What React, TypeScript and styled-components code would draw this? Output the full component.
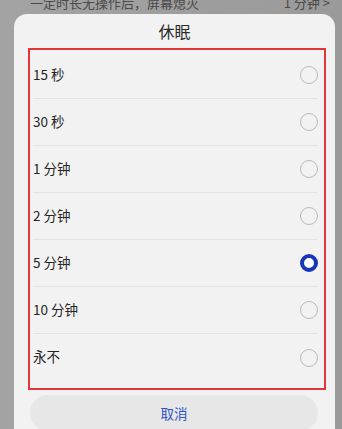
import styled, { createGlobalStyle } from 'styled-components'
import { useState } from 'react'

const GlobalStyle = createGlobalStyle`
  html, body {
    margin: 0;
    padding: 0;
    background: #9c9c9c;
    font-family: "Noto Sans CJK SC", "Noto Sans", sans-serif;
    overflow: hidden;
  }
`

const Screen = styled.div`
  width: 342px;
  height: 429px;
  overflow: hidden;
  background: linear-gradient(90deg, #a3a3a3 0%, #9a9a9a 100%);
`

const BackdropRow = styled.div`
  display: flex;
  align-items: flex-end;
  justify-content: space-between;
  height: 14px;
  padding: 0 12px 0 30px;
  color: #4a4a4a;
  font-size: 13px;
  white-space: nowrap;
  overflow: hidden;
`

const BackdropText = styled.span`
  line-height: 22px;
`

const Dialog = styled.div`
  margin-left: 14px;
  width: 321px;
  height: 430px;
  background: #f3f2f2;
  border-radius: 13px 13px 0 0;
  display: flex;
  flex-direction: column;
`

const Title = styled.div`
  height: 34px;
  display: flex;
  align-items: center;
  justify-content: center;
  font-size: 16px;
  color: #2c2c2c;
`

const OptionList = styled.ul`
  list-style: none;
  margin: 0 9px 0 14px;
  padding: 2px 6px 7px 3px;
  border: 2px solid #e2363b;
  display: flex;
  flex-direction: column;
`

const Option = styled.li<{ $last?: boolean }>`
  height: 47px;
  display: flex;
  align-items: center;
  justify-content: space-between;
  border-bottom: ${(p) => (p.$last ? 'none' : '1px solid #e3e3e3')};
  box-sizing: border-box;
  cursor: pointer;
`

const Label = styled.span`
  font-size: 13.5px;
  color: #242424;
  margin-bottom: 3px;
`

const Radio = styled.span<{ $checked: boolean }>`
  width: 18px;
  height: 18px;
  border-radius: 50%;
  box-sizing: border-box;
  border: ${(p) => (p.$checked ? '4px solid #1a36b8' : '1px solid #b9b9b9')};
  background: ${(p) => (p.$checked ? '#ffffff' : 'transparent')};
`

const CancelButton = styled.button`
  margin: 5px 0 0 16px;
  width: 288px;
  height: 36px;
  border: none;
  border-radius: 18px;
  background: #e7e7e8;
  color: #2f55c8;
  font-family: inherit;
  font-size: 13.5px;
  cursor: pointer;
`

const options = ['15 秒', '30 秒', '1 分钟', '2 分钟', '5 分钟', '10 分钟', '永不']

export default function App() {
  const [selected, setSelected] = useState('5 分钟')

  return (
    <>
      <GlobalStyle />
      <Screen>
        <BackdropRow>
          <BackdropText>一定时长无操作后，屏幕熄灭</BackdropText>
          <BackdropText>1 分钟 &gt;</BackdropText>
        </BackdropRow>
        <Dialog>
          <Title>休眠</Title>
          <OptionList>
            {options.map((opt, i) => (
              <Option
                key={opt}
                $last={i === options.length - 1}
                onClick={() => setSelected(opt)}
              >
                <Label>{opt}</Label>
                <Radio $checked={selected === opt} />
              </Option>
            ))}
          </OptionList>
          <CancelButton>取消</CancelButton>
        </Dialog>
      </Screen>
    </>
  )
}
